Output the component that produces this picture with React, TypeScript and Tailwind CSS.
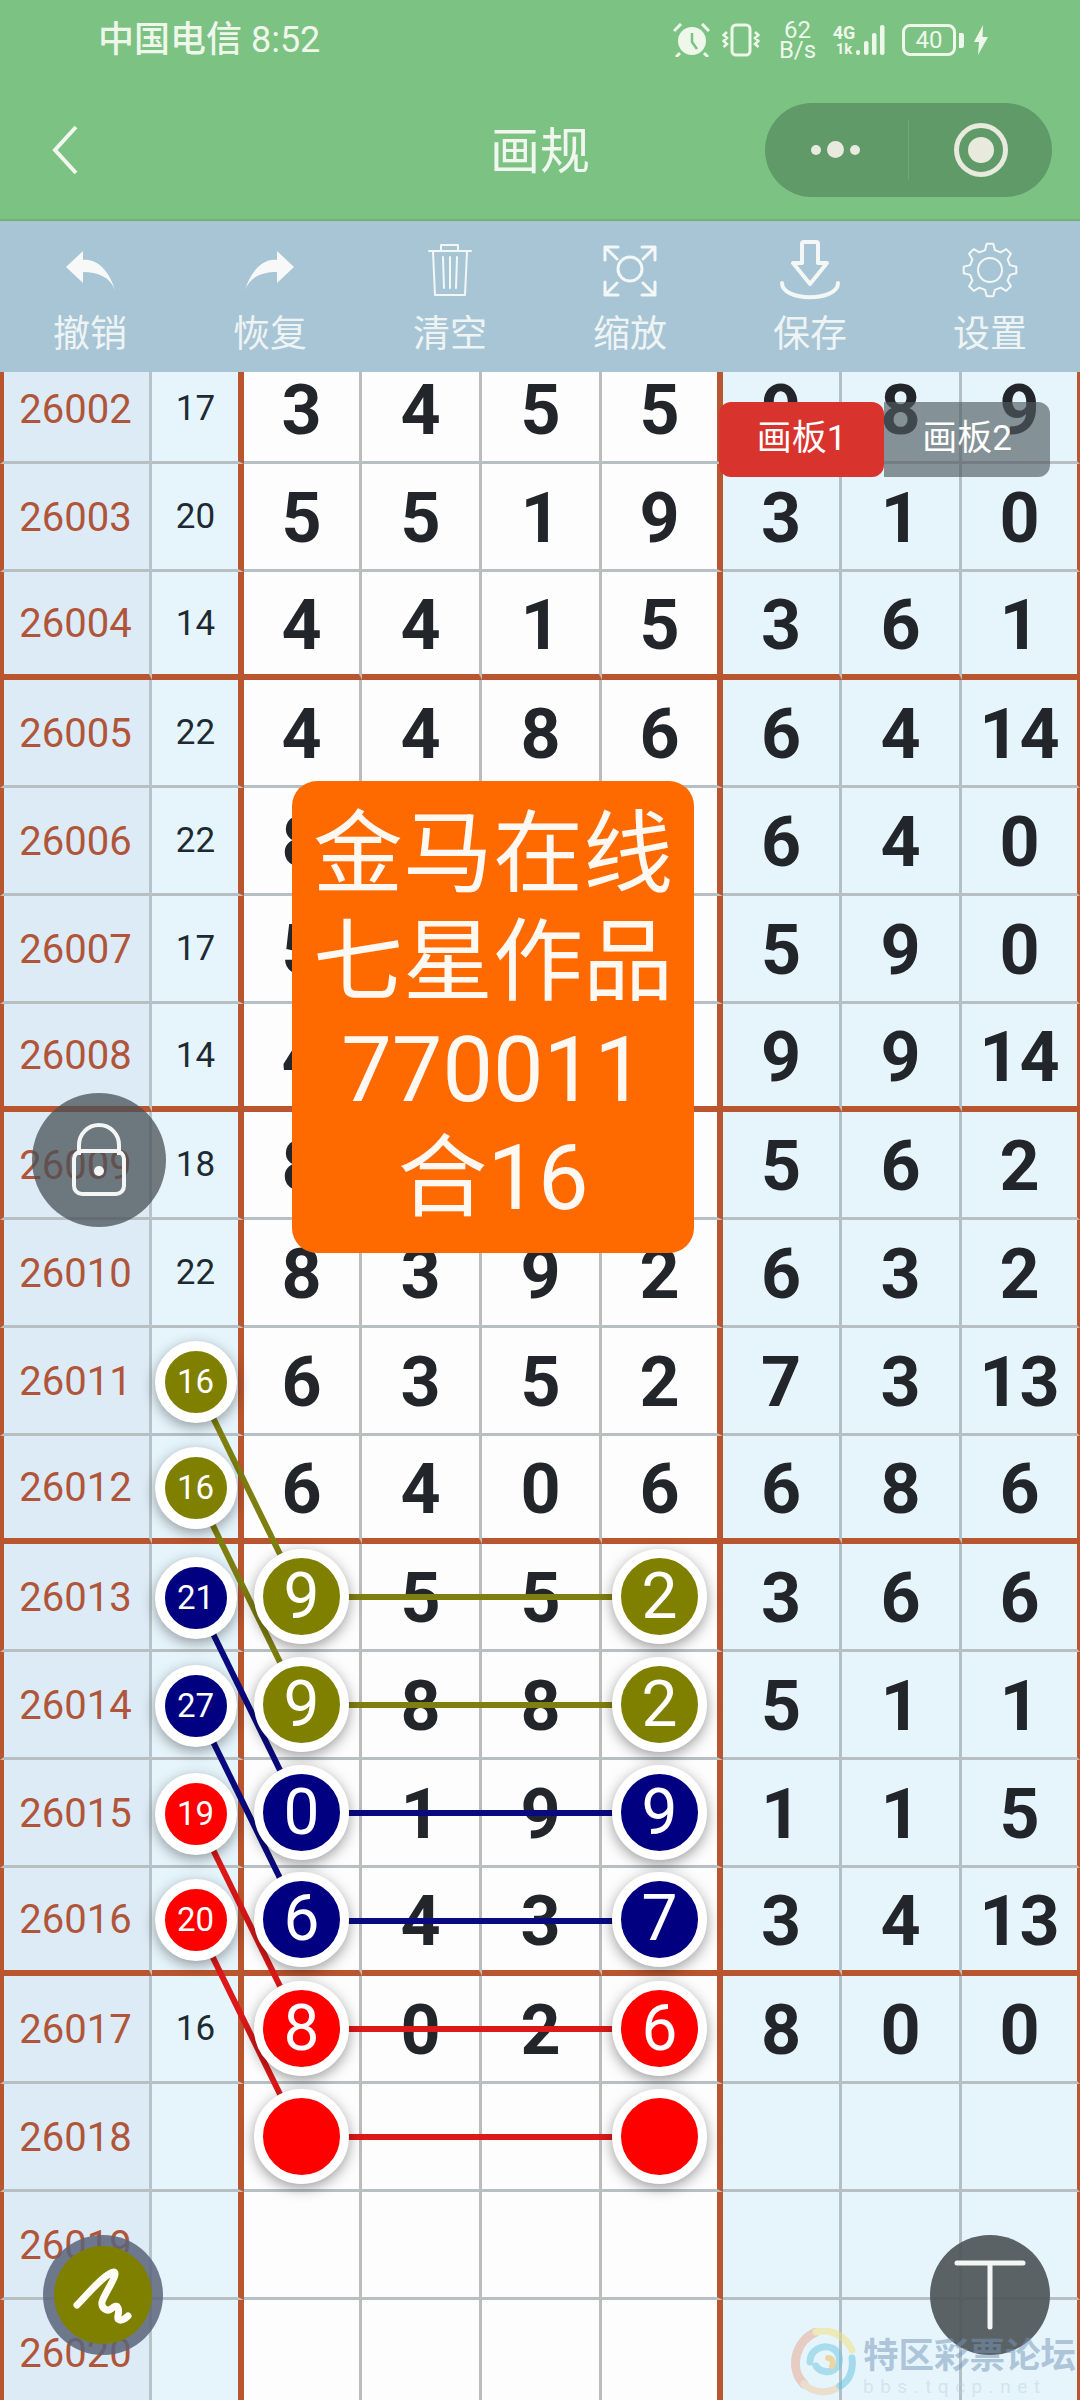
import clsx from "clsx";

type Tone = "olive" | "navy" | "red";

type Row = {
  id: string;
  sum: string;
  mid: string[];
  right: string[];
  thick?: boolean;
  sumTone?: Tone;
  midTone?: Tone;
};

const ROWS: Row[] = [
  { id: "26002", sum: "17", mid: ["3", "4", "5", "5"], right: ["9", "8", "9"] },
  { id: "26003", sum: "20", mid: ["5", "5", "1", "9"], right: ["3", "1", "0"] },
  { id: "26004", sum: "14", mid: ["4", "4", "1", "5"], right: ["3", "6", "1"], thick: true },
  { id: "26005", sum: "22", mid: ["4", "4", "8", "6"], right: ["6", "4", "14"] },
  { id: "26006", sum: "22", mid: ["8", "", "", ""], right: ["6", "4", "0"] },
  { id: "26007", sum: "17", mid: ["5", "", "", ""], right: ["5", "9", "0"] },
  { id: "26008", sum: "14", mid: ["4", "", "", ""], right: ["9", "9", "14"], thick: true },
  { id: "26009", sum: "18", mid: ["8", "", "", ""], right: ["5", "6", "2"] },
  { id: "26010", sum: "22", mid: ["8", "3", "9", "2"], right: ["6", "3", "2"] },
  { id: "26011", sum: "16", mid: ["6", "3", "5", "2"], right: ["7", "3", "13"], sumTone: "olive" },
  { id: "26012", sum: "16", mid: ["6", "4", "0", "6"], right: ["6", "8", "6"], thick: true, sumTone: "olive" },
  { id: "26013", sum: "21", mid: ["9", "5", "5", "2"], right: ["3", "6", "6"], sumTone: "navy", midTone: "olive" },
  { id: "26014", sum: "27", mid: ["9", "8", "8", "2"], right: ["5", "1", "1"], sumTone: "navy", midTone: "olive" },
  { id: "26015", sum: "19", mid: ["0", "1", "9", "9"], right: ["1", "1", "5"], sumTone: "red", midTone: "navy" },
  { id: "26016", sum: "20", mid: ["6", "4", "3", "7"], right: ["3", "4", "13"], thick: true, sumTone: "red", midTone: "navy" },
  { id: "26017", sum: "16", mid: ["8", "0", "2", "6"], right: ["8", "0", "0"], midTone: "red" },
  { id: "26018", sum: "", mid: ["", "", "", ""], right: ["", "", ""], midTone: "red" },
  { id: "26019", sum: "", mid: ["", "", "", ""], right: ["", "", ""] },
  { id: "26020", sum: "", mid: ["", "", "", ""], right: ["", "", ""] },
];

const TONE_BG: Record<Tone, string> = {
  olive: "bg-[#808000]",
  navy: "bg-[#000080]",
  red: "bg-[#ff0000]",
};

const MID_WIDTHS = ["w-[118px]", "w-[120px]", "w-[120px]", "w-[121px]"];
const RIGHT_WIDTHS = ["w-[119px]", "w-[120px]", "w-[118px]"];

// y of the two link rows, x is always the same columns
const LINKS = [
  { color: "#7f7f10", y1: 1381, y2: 1597 },
  { color: "#7f7f10", y1: 1489, y2: 1705 },
  { color: "#0a0a80", y1: 1597, y2: 1813 },
  { color: "#0a0a80", y1: 1705, y2: 1921 },
  { color: "#dc1818", y1: 1813, y2: 2029 },
  { color: "#dc1818", y1: 1921, y2: 2137 },
];

function gearPath() {
  const cx = 30;
  const cy = 30;
  const teeth = 8;
  let d = "";
  for (let i = 0; i < teeth; i++) {
    const a = (i / teeth) * Math.PI * 2;
    const step = Math.PI / teeth;
    const pts: [number, number][] = [
      [20.5, a - step * 0.62],
      [26.5, a - step * 0.32],
      [26.5, a + step * 0.32],
      [20.5, a + step * 0.62],
    ];
    pts.forEach(([r, t], j) => {
      const x = (cx + r * Math.cos(t)).toFixed(1);
      const y = (cy + r * Math.sin(t)).toFixed(1);
      d += `${i === 0 && j === 0 ? "M" : "L"}${x} ${y} `;
    });
  }
  return d + "Z";
}

function StatusBar() {
  return (
    <div className="flex h-[80px] items-center pl-[98px] pr-[92px] text-[#eef7ea]">
      <span className="text-[36px] leading-none [font-weight:450]">中国电信 8:52</span>
      <div className="ml-auto flex items-center">
        <svg width="37" height="34" viewBox="0 0 37 34" fill="#eef7ea">
          <circle cx="19" cy="18" r="14" />
          <path d="M19 10v9l5 7" fill="none" stroke="#7bc283" strokeWidth="2.5" />
          <path d="M1 8 8 1M36 8l-7-7M7 30l-4 4M31 30l4 4" fill="none" stroke="#eef7ea" strokeWidth="3" />
        </svg>
        <svg className="ml-[12px]" width="38" height="34" viewBox="0 0 38 34" fill="none" stroke="#eef7ea" strokeWidth="3">
          <rect x="10" y="2" width="18" height="30" rx="4" />
          <path d="M5 9 1.500 12 5 15 1.500 18 5 21 1.500 24M33 9l3.500 3-3.500 3 3.500 3-3.500 3 3.500 3" strokeWidth="2.500" />
        </svg>
        <div className="ml-[20px] flex w-[35px] flex-col items-center text-[24px] leading-[20px]">
          <span>62</span>
          <span>B/s</span>
        </div>
        <div className="ml-[20px] flex w-[18px] flex-col items-center font-bold">
          <span className="text-[18px] leading-[19px]">4G</span>
          <span className="text-[15px] leading-[15px]">1k</span>
        </div>
        <svg className="ml-[3px]" width="30" height="32" viewBox="0 0 30 32" fill="#eef7ea">
          <rect x="0" y="26" width="4" height="5" rx="2" />
          <rect x="8" y="17" width="4.500" height="14" rx="2" />
          <rect x="16" y="9" width="4.500" height="22" rx="2" />
          <rect x="24" y="1" width="4.500" height="30" rx="2" />
        </svg>
        <div className="ml-[16px] flex items-center">
          <div className="flex h-[32px] w-[54px] items-center justify-center rounded-[8px] border-[3px] border-[#eef7ea] text-[24px] leading-none">
            40
          </div>
          <div className="ml-[3px] h-[15px] w-[5px] rounded-r-[2px] bg-[#eef7ea]" />
        </div>
        <svg className="ml-[10px]" width="14" height="30" viewBox="0 0 14 30" fill="#eef7ea">
          <path d="M9 0 0 17h5l-1 13 10-18H8.500z" />
        </svg>
      </div>
    </div>
  );
}

function NavBar() {
  return (
    <div className="grid h-[141px] grid-cols-[1fr_auto_1fr] items-center border-b-2 border-[#72b279]">
      <div className="pl-[52px]">
        <svg width="26" height="50" viewBox="0 0 26 50" fill="none" stroke="#f1f7ee" strokeWidth="4">
          <path d="M24 2 3 25l21 23" />
        </svg>
      </div>
      <h1 className="pt-[5px] text-[50px] font-normal leading-none text-[#f1f7ee]">画规</h1>
      <div className="flex justify-end pr-[28px]">
        <div className="flex h-[94px] w-[287px] items-center rounded-full bg-[#5f9a68]">
          <div className="flex w-[143px] items-center justify-center gap-[6px] pr-[3px]">
            <span className="size-[10px] rounded-full bg-[#e7eadd]" />
            <span className="size-[17px] rounded-full bg-[#e7eadd]" />
            <span className="size-[10px] rounded-full bg-[#e7eadd]" />
          </div>
          <div className="h-[60px] w-px bg-[#6fa777]" />
          <div className="flex flex-1 items-center justify-center">
            <div className="flex size-[54px] items-center justify-center rounded-full border-[5px] border-[#e7eadd]">
              <span className="size-[26px] rounded-full bg-[#e7eadd]" />
            </div>
          </div>
        </div>
      </div>
    </div>
  );
}

function ToolIcon({ name }: { name: string }) {
  const common = { fill: "none", stroke: "#f3f7f6", strokeLinecap: "round" as const, strokeLinejoin: "round" as const };
  if (name === "undo" || name === "redo") {
    return (
      <svg className={clsx(name === "redo" && "-scale-x-100")} width="60" height="50" viewBox="0 0 60 50" fill="#f6f9f8">
        <path d="M6 22 23 6v9c15-2 27 13 32 30-5-13-17-18-32-18v11z" />
      </svg>
    );
  }
  if (name === "trash") {
    return (
      <svg width="60" height="60" viewBox="0 0 60 60" {...common} strokeWidth="2">
        <path d="M9 11h42M21 11V5h17v6M13 12l2 43h30l2-43M23 17l1 31M30 17v31M37 17l-1 31" />
      </svg>
    );
  }
  if (name === "zoom") {
    return (
      <svg width="60" height="60" viewBox="0 0 60 60" {...common} strokeWidth="3">
        <circle cx="30" cy="29" r="12" />
        <path d="M5 20V7h13M5 7l12 12M55 20V7H42M55 7 43 19M5 42v13h13M5 55l12-12M55 42v13H42M55 55 43 43" />
      </svg>
    );
  }
  if (name === "save") {
    return (
      <svg width="60" height="60" viewBox="0 0 60 60" {...common} strokeWidth="4">
        <path d="M22 4a2 2 0 0 1 2-2h12a2 2 0 0 1 2 2v19h9L30 44 13 23h9z" />
        <path d="M2 43c0 19 56 19 56 0" />
      </svg>
    );
  }
  return (
    <svg width="60" height="60" viewBox="0 0 60 60" {...common} strokeWidth="2">
      <path d={gearPath()} />
      <circle cx="30" cy="30" r="12" />
    </svg>
  );
}

function Toolbar() {
  const tools = [
    { name: "undo", label: "撤销" },
    { name: "redo", label: "恢复" },
    { name: "trash", label: "清空" },
    { name: "zoom", label: "缩放" },
    { name: "save", label: "保存" },
    { name: "gear", label: "设置" },
  ];
  return (
    <div className="grid h-[151px] grid-cols-6 bg-[#a8c5d6] pt-[19px]">
      {tools.map((tool) => (
        <div key={tool.name} className="flex flex-col items-center">
          <div className="flex h-[60px] items-center justify-center">
            <ToolIcon name={tool.name} />
          </div>
          <span className="mt-[15px] text-[37px] leading-[40px] text-[#eef4f4]">{tool.label}</span>
        </div>
      ))}
    </div>
  );
}

function Ball({ tone, value, small }: { tone: Tone; value: string; small?: boolean }) {
  return (
    <div
      className={clsx(
        "relative z-20 flex shrink-0 items-center justify-center rounded-full border-white text-white shadow-[0_4px_14px_rgba(0,0,0,0.38)]",
        TONE_BG[tone],
        small ? "size-[82px] border-[10px] text-[33px]" : "size-[95px] border-[9px] text-[64px]",
      )}
    >
      {value}
    </div>
  );
}

function Cell({ className, thick, children }: { className: string; thick?: boolean; children?: React.ReactNode }) {
  return (
    <div
      className={clsx(
        "flex h-full items-center justify-center",
        thick ? "border-b-[6px] border-b-[#b9552f]" : "border-b-[3px] border-b-[#b8bfc3]",
        className,
      )}
    >
      {children}
    </div>
  );
}

function Digit({ value }: { value: string }) {
  return <span className="pt-[3px] text-[70px] font-bold leading-none text-[#22262a]">{value}</span>;
}

function TableRow({ row }: { row: Row }) {
  return (
    <div className="flex h-[108px]">
      <Cell
        thick={row.thick}
        className="w-[152px] border-l-4 border-r-[3px] border-l-[#b9552f] border-r-[#b8c2c8] bg-[#dcebf5] pr-[2px] pt-[2px] text-[40px] text-[#b0553a]"
      >
        {row.id}
      </Cell>
      <Cell
        thick={row.thick}
        className="w-[92px] border-r-[6px] border-r-[#b9552f] bg-[#e6f5fc] pl-[1px] pt-[2px] text-[35px] text-[#1d2a33]"
      >
        {row.sumTone ? <Ball small tone={row.sumTone} value={row.sum} /> : row.sum}
      </Cell>
      {row.mid.map((value, i) => (
        <Cell
          key={i}
          thick={row.thick}
          className={clsx(
            MID_WIDTHS[i],
            "bg-[#fdfdfd]",
            i === 3 ? "border-r-[6px] border-r-[#b9552f]" : "border-r-[3px] border-r-[#bcbcbc]",
          )}
        >
          {row.midTone && (i === 0 || i === 3) ? <Ball tone={row.midTone} value={value} /> : <Digit value={value} />}
        </Cell>
      ))}
      {row.right.map((value, i) => (
        <Cell
          key={i}
          thick={row.thick}
          className={clsx(
            RIGHT_WIDTHS[i],
            "bg-[#e6f5fc]",
            i === 2 ? "border-r-[3px] border-r-[#b9552f]" : "border-r-[3px] border-r-[#b2bfc6]",
          )}
        >
          <Digit value={value} />
        </Cell>
      ))}
    </div>
  );
}

function Watermark() {
  return (
    <div className="pointer-events-none absolute left-[790px] top-[2328px] z-40 flex w-[290px] opacity-50">
      <svg width="66" height="68" viewBox="0 0 66 68" fill="none" strokeLinecap="round">
        <path d="M26 4C6 12-2 40 14 56" stroke="#e9a58c" strokeWidth="9" />
        <path d="M14 56c10 10 26 10 36 2" stroke="#f2c9a0" strokeWidth="7" />
        <path d="M26 4c14-4 30 4 36 18" stroke="#f4e07a" strokeWidth="7" />
        <path d="M62 30c2 14-4 24-12 28" stroke="#63c3dd" strokeWidth="7" />
        <path d="M20 34c0-12 12-18 22-14 8 4 10 14 4 20-6 6-16 4-20-2" stroke="#6ec7e0" strokeWidth="7" />
        <path d="M38 30c4 0 6 4 4 8" stroke="#f0b84a" strokeWidth="6" />
      </svg>
      <div className="ml-[7px] flex flex-col">
        <span className="mt-[10px] whitespace-nowrap text-[35.500px] font-bold leading-[36px] text-[#7595b8]">
          特区彩票论坛
        </span>
        <span className="mt-[3px] whitespace-nowrap text-[19px] leading-[20px] tracking-[6.500px] text-[#c2d4e2]">
          bbs.tqcp.net
        </span>
      </div>
    </div>
  );
}

export default function App() {
  return (
    <div className="relative h-[2400px] w-[1080px] overflow-hidden bg-[#e6f5fc] [font-family:Roboto,'Noto_Sans_CJK_SC',sans-serif]">
      <header className="bg-[#7bc283]">
        <StatusBar />
        <NavBar />
      </header>
      <Toolbar />

      <main className="h-[2028px] overflow-hidden">
        <div className="-mt-[16px]">
          {ROWS.map((row) => (
            <TableRow key={row.id} row={row} />
          ))}
        </div>
      </main>

      {/* links between the balls, they lie over the digits and under the balls */}
      <svg className="pointer-events-none absolute inset-0 z-10" width="1080" height="2400" viewBox="0 0 1080 2400">
        {LINKS.map((link) => (
          <g key={link.y1} stroke={link.color} strokeWidth="6">
            <line x1="195" y1={link.y1} x2="301" y2={link.y2} />
            <line x1="301" y1={link.y2} x2="660" y2={link.y2} />
          </g>
        ))}
      </svg>

      <div className="absolute left-[719px] top-[402px] z-30 flex h-[75px] text-[35px] text-white">
        <div className="relative z-10 flex w-[165px] items-center justify-center rounded-[12px] bg-[#d9332d]">画板1</div>
        <div className="flex w-[166px] items-center justify-center rounded-r-[12px] bg-[rgba(80,90,96,0.65)]">画板2</div>
      </div>

      <div className="absolute left-[292px] top-[781px] z-30 flex h-[472px] w-[402px] flex-col items-center rounded-[25px] bg-[#ff6a00] pt-[20px] text-[90px] leading-[108px] text-[#fdf8f2]">
        <span>金马在线</span>
        <span>七星作品</span>
        <span>770011</span>
        <span>合16</span>
      </div>

      <button className="absolute left-[32px] top-[1093px] z-30 flex size-[134px] items-center justify-center rounded-full bg-[rgba(72,80,86,0.75)]">
        <svg width="56" height="74" viewBox="0 0 56 74" fill="none" stroke="#f4f6f6" strokeWidth="4">
          <path d="M8 32V22a20 20 0 0 1 40 0v10" />
          <rect x="3" y="28" width="50" height="43" rx="8" />
          <circle cx="28" cy="48" r="5" fill="#f4f6f6" stroke="none" />
        </svg>
      </button>

      <button className="absolute left-[43px] top-[2235px] z-30 flex size-[120px] items-center justify-center rounded-full bg-[rgba(90,100,122,0.85)]">
        <span className="flex size-[98px] items-center justify-center rounded-full bg-[#808000]">
          <svg width="60" height="60" viewBox="0 0 60 60" fill="none" stroke="#fdfdf6" strokeWidth="7" strokeLinecap="round" strokeLinejoin="round">
            <path d="M4 40C14 30 32 8 41 7c5 2-10 22-12 30-1 6 5 10 9 7 4-3 6-4 7-1 2 3-1 8 0 11 3 3 8-1 10-3" />
          </svg>
        </span>
      </button>

      <button className="absolute left-[930px] top-[2235px] z-30 flex size-[120px] items-center justify-center rounded-full bg-[rgba(80,86,90,0.93)]">
        <svg width="72" height="72" viewBox="0 0 72 72" fill="none" stroke="#f4f6f6" strokeWidth="5" strokeLinecap="round">
          <path d="M3 4h66M36 4v64" />
        </svg>
      </button>

      <Watermark />
    </div>
  );
}
